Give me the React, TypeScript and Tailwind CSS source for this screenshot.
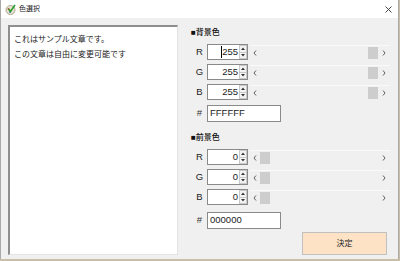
import React from "react";

const FONT = { fontFamily: "'Liberation Sans', 'Noto Sans CJK JP', sans-serif" };

function Chevron({ dir }: { dir: "l" | "r" }) {
  return (
    <svg width="4" height="6" viewBox="0 0 4 6">
      <path
        d={dir === "l" ? "M3 0.5 L1 3 L3 5.5" : "M1 0.5 L3 3 L1 5.5"}
        stroke="#606060"
        strokeWidth="1"
        fill="none"
      />
    </svg>
  );
}

function ScrollBar({ value }: { value: number }) {
  const left = Math.round((value / 255) * 108);
  return (
    <div className="ml-[2px] flex h-[15px] w-[140px] items-center border-t border-[#fafafa] bg-[#f0f0f0]">
      <div className="flex w-[10px] justify-center">
        <Chevron dir="l" />
      </div>
      <div className="flex h-full w-[118px] items-center">
        <div className="h-[12px] w-[10px] bg-[#cdcdcd]" style={{ marginLeft: left }} />
      </div>
      <div className="flex w-[12px] justify-center">
        <Chevron dir="r" />
      </div>
    </div>
  );
}

function Tri({ up }: { up: boolean }) {
  return (
    <svg width="4" height="3" viewBox="0 0 4 3">
      <path d={up ? "M0 3 L2 0.5 L4 3 Z" : "M0 0 L2 2.5 L4 0 Z"} fill="#333" />
    </svg>
  );
}

function SpinBox({ value, caret }: { value: number; caret?: boolean }) {
  return (
    <div className="flex h-[16px] w-[41px] border border-[#8a8a8a] bg-white">
      <div className="flex flex-1 items-center justify-end pr-[1px] text-[9.5px] leading-none text-[#222]">
        {caret && <span className="inline-block h-[12px] w-px bg-black" />}
        {value}
      </div>
      <div className="flex w-[8px] flex-col">
        <div className="flex flex-1 items-center justify-center border border-[#c8c8c8] bg-[#f4f4f4]">
          <Tri up />
        </div>
        <div className="flex flex-1 items-center justify-center border border-t-0 border-[#c8c8c8] bg-[#f4f4f4]">
          <Tri up={false} />
        </div>
      </div>
    </div>
  );
}

function ColorRow({ label, value, caret, mt }: { label: string; value: number; caret?: boolean; mt: string }) {
  return (
    <div className={`flex h-[16px] items-center ${mt}`}>
      <span className="w-[16px] pl-[1px] text-center text-[9.5px] text-[#222]">{label}</span>
      <SpinBox value={value} caret={caret} />
      <ScrollBar value={value} />
    </div>
  );
}

function HexRow({ hex, mt }: { hex: string; mt: string }) {
  return (
    <div className={`flex items-center ${mt}`}>
      <span className="w-[16px] pl-[1px] text-center text-[9.5px] text-[#333]">#</span>
      <div className="flex h-[17px] w-[74px] items-center border border-[#8a8a8a] bg-white pl-[2px] text-[9.5px] text-[#222]">
        {hex}
      </div>
    </div>
  );
}

export default function App() {
  return (
    <div className="h-[261px] w-[400px] bg-[#c9bea8]" style={FONT}>
      <div className="flex h-[259px] w-[399px] flex-col border-l border-r border-[#a9a9a9] bg-[#f0f0f0]">
        <div className="flex h-[18px] items-center bg-white">
          <svg className="ml-[4px]" width="11" height="11" viewBox="0 0 11 11">
            <circle cx="5.5" cy="6" r="4.5" fill="#e8e2d0" stroke="#9a9480" strokeWidth="0.8" />
            <circle cx="3.5" cy="5" r="0.9" fill="#d04040" />
            <circle cx="5" cy="8" r="0.9" fill="#3a70c0" />
            <path d="M3.5 5 L5.5 7.5 L10 1" stroke="#2a9a2a" strokeWidth="1.6" fill="none" />
          </svg>
          <span className="ml-[3px] text-[7px] text-[#222]">色選択</span>
          <div className="flex-1" />
          <svg className="mr-[6px]" width="7" height="7" viewBox="0 0 7 7">
            <path d="M0.5 0.5 L6.5 6.5 M6.5 0.5 L0.5 6.5" stroke="#333" strokeWidth="0.9" />
          </svg>
        </div>
        <div className="flex items-start">
          <div className="ml-[7px] mt-[7px] h-[230px] w-[170px] border-l-2 border-t-2 border-[#8e8e8e] border-b border-r border-b-[#e3e3e3] border-r-[#e3e3e3] bg-white pl-[4px] pt-[5px] text-[8px] leading-[15px] text-[#222]">
            <div>これはサンプル文章です。</div>
            <div>この文章は自由に変更可能です</div>
          </div>
          <div className="ml-[13px] flex flex-col pt-[9px]">
            <div className="h-[12px] text-[8px] font-medium leading-[12px] text-[#111]">■背景色</div>
            <ColorRow label="R" value={255} caret mt="mt-[5px]" />
            <ColorRow label="G" value={255} mt="mt-[4px]" />
            <ColorRow label="B" value={255} mt="mt-[4px]" />
            <HexRow hex="FFFFFF" mt="mt-[5px]" />
            <div className="mt-[10px] h-[12px] text-[8px] font-medium leading-[12px] text-[#111]">■前景色</div>
            <ColorRow label="R" value={0} mt="mt-[5px]" />
            <ColorRow label="G" value={0} mt="mt-[4px]" />
            <ColorRow label="B" value={0} mt="mt-[4px]" />
            <HexRow hex="000000" mt="mt-[7px]" />
            <button className="ml-[111px] mt-[3px] flex h-[23px] w-[85px] items-center justify-center border border-[#c0c0c0] bg-[#fde2c6] text-[8px] text-[#222]">
              決定
            </button>
          </div>
        </div>
      </div>
    </div>
  );
}
